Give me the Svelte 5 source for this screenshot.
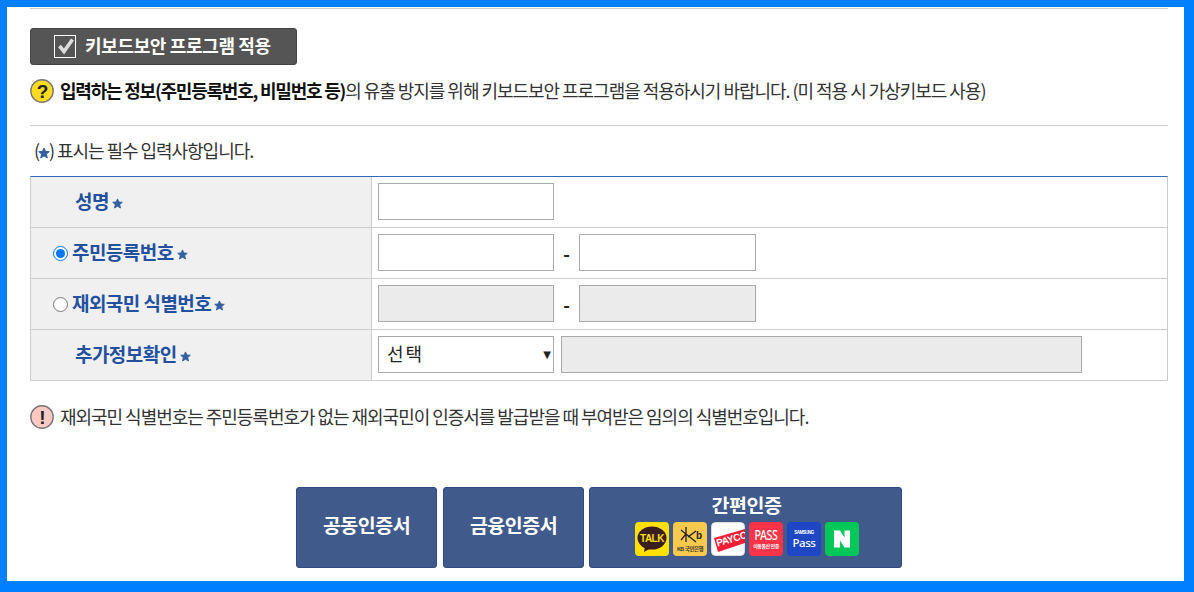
<script>
  const rows = [
    { label: '성명', kind: 'name' },
    { label: '주민등록번호', kind: 'pair', radio: true, checked: true },
    { label: '재외국민 식별번호', kind: 'pair', radio: true, disabled: true },
    { label: '추가정보확인', kind: 'extra' }
  ];
</script>

{#snippet star(cls)}
  <svg class={cls} viewBox="-0.5 -0.5 11 11" aria-hidden="true"><path d="M5 0.4 L6.4 3.5 L9.8 3.8 L7.2 6 L8 9.5 L5 7.7 L2 9.5 L2.8 6 L0.2 3.8 L3.6 3.5Z" fill="#34609f" stroke="#34609f" stroke-width="0.9" stroke-linejoin="round"/></svg>
{/snippet}

<div class="frame">
  <div class="page">
    <div class="rule-top"></div>
    <div class="secure"><svg class="chk" width="23" height="23" viewBox="0 0 23 23"><rect x="0.5" y="0.5" width="21" height="22" fill="none" stroke="#fff"/><path d="M5.5 11 L10 16.5 L18.5 4.5" fill="none" stroke="#dcdcdc" stroke-width="3.6"/></svg><span>키보드보안 프로그램 적용</span></div>
    <div class="notice">
      <svg class="ico" width="24" height="24" viewBox="0 0 24 24"><circle cx="12" cy="12" r="11.2" fill="#fddc22" stroke="#777" stroke-width="1.4"/><text x="12" y="18.5" text-anchor="middle" class="glyph">?</text></svg>
      <p><b>입력하는 정보(주민등록번호, 비밀번호 등)</b>의 유출 방지를 위해 키보드보안 프로그램을 적용하시기 바랍니다. (미 적용 시 가상키보드 사용)</p>
    </div>
    <div class="rule-mid"></div>
    <p class="req">({@render star('star big')}) 표시는 필수 입력사항입니다.</p>

    <div class="table">
      {#each rows as r}
        <div class="row">
          <div class="th" class:has-radio={r.radio}>
            {#if r.radio}
              <input type="radio" name="idtype" checked={r.checked} />
            {/if}
            <span class="lbl">{r.label}</span>{@render star('star')}
          </div>
          <div class="td">
            {#if r.kind === 'name'}
              <input class="field" type="text" />
            {:else if r.kind === 'pair'}
              <input class="field" class:off={r.disabled} type="text" />
              <span class="dash">-</span>
              <input class="field second" class:off={r.disabled} type="text" />
            {:else}
              <div class="select"><span>선택</span><em>▼</em></div>
              <input class="field off wide" type="text" />
            {/if}
          </div>
        </div>
      {/each}
    </div>

    <div class="notice warn">
      <svg class="ico" width="24" height="24" viewBox="0 0 24 24"><circle cx="12" cy="12" r="11.2" fill="#fcc9c4" stroke="#777" stroke-width="1.4"/><text x="12" y="18.5" text-anchor="middle" class="glyph">!</text></svg>
      <p>재외국민 식별번호는 주민등록번호가 없는 재외국민이 인증서를 발급받을 때 부여받은 임의의 식별번호입니다.</p>
    </div>

    <div class="actions">
      <button class="btn small"><span class="cap">공동인증서</span></button>
      <button class="btn small"><span class="cap">금융인증서</span></button>
      <button class="btn large">
        <span>간편인증</span>
        <span class="logos">
          <svg width="34" height="34" viewBox="0 0 34 34"><rect width="34" height="34" rx="4" fill="#ffe000"/><ellipse cx="17" cy="16" rx="14.5" ry="11.5" fill="#3a1d1d"/><path d="M10 24 L9 30 L16 26Z" fill="#3a1d1d"/><text x="17" y="20" text-anchor="middle" class="lg" font-size="10" fill="#ffe000">TALK</text></svg>
          <svg width="34" height="34" viewBox="0 0 34 34"><rect width="34" height="34" rx="4" fill="#f9c94e"/><path d="M8 8 L13 12 L8 18 M13 5 V20 M13 12 L23 20 M23 9 L15 15" fill="none" stroke="#222" stroke-width="1.3"/><text x="23" y="17" class="lg" font-size="10" fill="#222">b</text><text x="17" y="29" text-anchor="middle" class="lg" font-size="5.5" fill="#333">KB 국민은행</text></svg>
          <svg width="34" height="34" viewBox="0 0 34 34"><defs><clipPath id="pc"><rect width="34" height="34" rx="4"/></clipPath></defs><rect x="0.5" y="0.5" width="33" height="33" rx="4" fill="#fff" stroke="#ddd"/><g clip-path="url(#pc)"><path d="M3 16 L34 7 V21 L7 30Z" fill="#f01f35"/><text x="6.5" y="24.5" transform="rotate(-16 6.5 24.5)" class="lg" font-size="10" fill="#fff">PAYCO</text></g></svg>
          <svg width="34" height="34" viewBox="0 0 34 34"><rect width="34" height="34" rx="4" fill="#f93448"/><text x="5.5" y="18" textLength="23" lengthAdjust="spacingAndGlyphs" class="lg3" font-size="13.5" fill="#fff">PASS</text><text x="17" y="26" text-anchor="middle" class="lg" font-size="5" fill="#fff">이동통신 인증</text></svg>
          <svg width="34" height="34" viewBox="0 0 34 34"><rect width="34" height="34" rx="4" fill="#1f46c4"/><text x="17" y="11.5" text-anchor="middle" class="lg" font-size="4.5" fill="#fff">SAMSUNG</text><text x="17" y="25" text-anchor="middle" class="lg2" font-size="11.5" fill="#fff">Pass</text></svg>
          <svg width="34" height="34" viewBox="0 0 34 34"><rect width="34" height="34" rx="4" fill="#04c75a"/><path d="M9 8.5 H15 L19.5 15.5 V8.5 H25 V25.5 H19.5 L15 18.5 V25.5 H9Z" fill="#fff"/></svg>
        </span>
      </button>
    </div>
  </div>
</div>

<style>
  :global(body) { margin: 0; }
  .frame {
    box-sizing: border-box;
    width: 1194px;
    height: 592px;
    background: #0080ff;
    padding: 7px 10px 11px 7px;
    font-family: "Noto Sans CJK KR", "Noto Sans", sans-serif;
  }
  .page {
    height: 574px;
    background: #fff;
    padding: 1px 16px 0 23px;
    box-sizing: border-box;
    overflow: hidden;
  }
  .rule-top { height: 1px; background: #ccc; }
  .secure {
    box-sizing: border-box;
    width: 267px;
    height: 37px;
    margin-top: 19px;
    background: #555;
    border: 1px solid #444;
    border-radius: 3px;
    display: flex;
    align-items: center;
    padding-left: 23px;
    gap: 8px;
    color: #fff;
    font-size: 18px;
    font-weight: 700;
    letter-spacing: -0.35px;
  }
  .secure span { padding-bottom: 4px; }
  .chk { flex: none; }
  .notice {
    display: flex;
    align-items: center;
    gap: 6px;
    height: 24px;
    margin-top: 14px;
    font-size: 18px;
    letter-spacing: -1.03px;
    color: #333;
  }
  .notice p { margin: 0; padding-bottom: 2px; white-space: nowrap; }
  .notice b { color: #111; font-weight: 700; letter-spacing: -1.22px; }
  .ico { flex: none; }
  .glyph { font: 700 19px "Liberation Sans", sans-serif; fill: #222; }
  .rule-mid { height: 1px; background: #ccc; margin-top: 22px; }
  .req {
    margin: 12px 0 0 4px;
    height: 24px;
    line-height: 24px;
    font-size: 18px;
    letter-spacing: -1.05px;
    color: #333;
    white-space: nowrap;
  }
  .star {
    width: 11px;
    height: 11px;
    flex: none;
    margin: 3px 0 0 3px;
  }
  .star.big {
    width: 12px;
    height: 12px;
    margin: 0 -1px 0 -1px;
    vertical-align: -1px;
  }
  .table {
    margin-top: 14px;
    border-top: 1px solid #2f6bbd;
    border-left: 1px solid #ccc;
    border-right: 1px solid #ccc;
  }
  .row {
    display: grid;
    grid-template-columns: 341px 1fr;
    height: 51px;
    box-sizing: border-box;
    border-bottom: 1px solid #ccc;
  }
  .th {
    background: #f0f0f0;
    border-right: 1px solid #ccc;
    display: flex;
    align-items: center;
    padding-left: 44px;
    color: #23509f;
    font-size: 19px;
    font-weight: 700;
    letter-spacing: -0.55px;
    white-space: nowrap;
  }
  .lbl { padding-bottom: 4px; }
  .th.has-radio { padding-left: 22px; }
  input[type="radio"] {
    width: 15px;
    height: 15px;
    margin: 0 4px 0 0;
    accent-color: #0075ff;
  }
  .td {
    display: flex;
    align-items: center;
    padding: 0 0 1px 6px;
  }
  .field {
    box-sizing: border-box;
    width: 176px;
    height: 37px;
    border: 1px solid #aaa;
    background: #fff;
    padding: 0;
    margin: 0;
    outline: none;
  }
  .field.second { width: 177px; }
  .field.off { background: #ebebeb; }
  .field.wide { width: 521px; margin-left: 7px; }
  .dash { width: 25px; text-align: center; font-size: 18px; font-weight: 700; color: #222; }
  .select {
    box-sizing: border-box;
    width: 176px;
    height: 37px;
    border: 1px solid #aaa;
    display: flex;
    align-items: center;
    justify-content: space-between;
    padding: 0 2px 0 8px;
    font-size: 18px;
    letter-spacing: 2px;
    color: #222;
  }
  .select span { padding-bottom: 4px; }
  .select em { font: normal 10px "DejaVu Sans", sans-serif; color: #222; letter-spacing: 0; }
  .warn { margin-top: 24px; }
  .actions {
    display: flex;
    gap: 6px;
    margin: 58px 0 0 266px;
  }
  .btn {
    box-sizing: border-box;
    height: 81px;
    background: #3f5a8b;
    border: 1px solid #2f4b82;
    border-radius: 3px;
    color: #fff;
    font-family: inherit;
    font-size: 19.5px;
    font-weight: 700;
    letter-spacing: -0.5px;
    padding: 0;
  }
  .cap { display: block; padding-bottom: 6px; }
  .small { width: 141px; }
  .large {
    width: 313px;
    margin-left: -1px;
    display: flex;
    flex-direction: column;
    align-items: center;
    padding: 4px 0 0 2px;
    gap: 4px;
    line-height: 26px;
  }
  .logos { display: flex; gap: 4px; height: 34px; }
  .logos svg { display: block; }
  .lg { font-family: "Liberation Sans", "Noto Sans CJK KR", sans-serif; font-weight: 700; }
  .lg2 { font-family: "Noto Sans", sans-serif; font-weight: 500; }
  .lg3 { font-family: "Noto Sans", sans-serif; font-weight: 500; }
</style>
